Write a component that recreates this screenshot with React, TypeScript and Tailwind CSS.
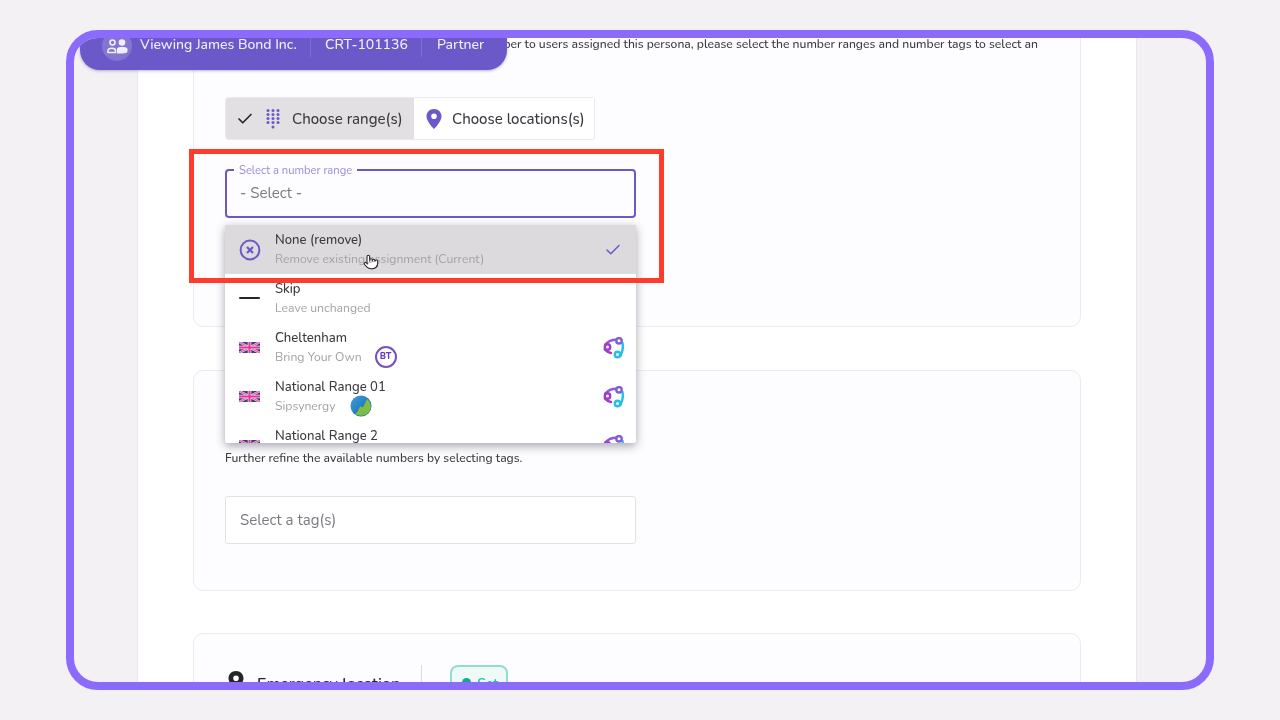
import React from "react";
import { Check, Pointer } from "lucide-react";

const font = "font-['Nunito','Noto_Sans','Open_Sans',sans-serif]";

function Flag() {
  return (
    <svg width="21" height="11" viewBox="0 0 21 11" className="shrink-0">
      <rect width="21" height="11" rx="1" fill="#3a3f78" />
      <path d="M0 0L21 11M21 0L0 11" stroke="#f3c6dc" strokeWidth="2.4" />
      <path d="M0 0L21 11M21 0L0 11" stroke="#e0409a" strokeWidth="0.9" />
      <path d="M10.5 0V11M0 5.5H21" stroke="#f7d6e6" strokeWidth="3.6" />
      <path d="M10.5 0V11M0 5.5H21" stroke="#e535a0" strokeWidth="2" />
    </svg>
  );
}

function Network() {
  return (
    <svg width="22" height="22" viewBox="0 0 22 22" fill="none" strokeWidth="2.4" strokeLinecap="round">
      <path d="M14 2.800C10 2.800 6 4.500 3.200 7.600" stroke="#8a5ad8" />
      <path d="M2.800 12.500C4.500 14.500 6.500 15.500 9 16" stroke="#a03ccc" />
      <path d="M20.500 6C21.300 10 21 14 18.500 19" stroke="#25bfe9" />
      <circle cx="17" cy="3.800" r="2.700" stroke="#7f5ed8" />
      <circle cx="5.500" cy="10" r="2.700" stroke="#a03ccc" />
      <circle cx="15.500" cy="17.500" r="2.700" stroke="#25bfe9" />
    </svg>
  );
}

function Row({
  icon,
  title,
  sub,
  badge,
  right,
  active,
}: {
  icon: React.ReactNode;
  title: string;
  sub?: string;
  badge?: React.ReactNode;
  right?: React.ReactNode;
  active?: boolean;
}) {
  return (
    <div className={`flex h-[49px] shrink-0 items-start pl-[14px] pr-[11px] ${active ? "bg-[#dcdadd]" : "bg-white"}`}>
      <div className="flex h-[49px] w-[36px] shrink-0 items-center">{icon}</div>
      <div className="min-w-0 flex-1 pt-[6px]">
        <div className="text-[13.1px] font-medium leading-[18px] text-[#3b3a40]">{title}</div>
        <div className="flex h-[20px] items-center text-[12.2px] text-[#a3a2a8]">
          {sub}
          {badge}
        </div>
      </div>
      <div className="flex h-[49px] w-[24px] items-center justify-center">{right}</div>
    </div>
  );
}

export default function App() {
  return (
    <div className={`h-[720px] w-[1280px] overflow-hidden bg-[#f3f1f4] pl-[66px] pt-[30px] ${font}`}>
      <div className="relative h-[660px] w-[1148px] overflow-hidden rounded-[32px] border-8 border-[#8a6bfb] bg-[#f3f1f4]">
        {/* banner */}
        <div className="absolute left-[6px] top-0 z-30 flex h-[32px] w-[427px] items-center rounded-b-[20px] bg-[#6b58c9] pb-[18px] pl-[22px] text-[14px] font-medium text-[#f1effb] shadow-[0_1px_3px_rgba(60,50,120,0.35)] blur-[0.4px]">
          <div className="mt-[2px] flex h-[30px] w-[30px] shrink-0 items-center justify-center rounded-full bg-[#8475d3]">
            <svg width="21" height="15" viewBox="0 0 21 15" fill="#f1effb">
              <circle cx="5.500" cy="3.500" r="2.500" fill="none" stroke="#f1effb" strokeWidth="1.600" />
              <circle cx="15" cy="3.500" r="3.300" />
              <path d="M1 13.500V11.500C1 10 2.500 9.200 5 9.200S8.500 10 8.500 11.500V13.500Z" fill="none" stroke="#f1effb" strokeWidth="1.600" />
              <path d="M10 14.500V10C10 8.500 12 8 15 8s5.500.5 5.500 2V12c0 1.800-2 2.500-5.500 2.500Z" />
            </svg>
          </div>
          <span className="ml-[8px] w-[171px] shrink-0 whitespace-nowrap border-r border-[#7f6ed2] leading-[24px]">Viewing James Bond Inc.</span>
          <span className="w-[111px] shrink-0 whitespace-nowrap border-r border-[#7f6ed2] pl-[14px] leading-[24px]">CRT-101136</span>
          <span className="pl-[15px] leading-[24px]">Partner</span>
        </div>

        {/* highlight */}
        <div className="pointer-events-none absolute left-[115px] top-[111px] z-40 h-[134px] w-[475px] border-[5px] border-[#ff3b2a]" />

        {/* page panel */}
        <div className="ml-[63px] h-full w-[1000px] overflow-hidden border-x border-[#eae7f5] bg-white px-[55px] blur-[0.4px]">
          {/* card 1 */}
          <div className="-mt-[40px] h-[329px] rounded-[10px] border border-[#eceaf0] bg-[#fdfcfe] pl-[31px] pr-[42px] pt-[36px]">
            <p className="h-[18px] whitespace-nowrap text-right text-[12.15px] font-medium leading-[18px] text-[#3b3a40]">
              To automatically assign a phone number to users assigned this persona, please select the number ranges and number tags to select an
            </p>
            <div className="mt-[44px] flex h-[43px] w-[370px] overflow-hidden rounded-[3px] border border-[#ebe9ef] pt-0 text-[15px] font-medium text-[#3b3a40]">
              <div className="flex w-[188px] shrink-0 items-center bg-[#e2e0e3] pl-[10px] pt-[1px]">
                <Check size={18} strokeWidth={2.2} className="text-[#26252b]" />
                <svg width="16" height="20" viewBox="0 0 16 20" fill="#6b58c9" className="ml-[11px]">
                  {[1.5, 5.5, 9.5, 13.5].map((y) =>
                    [3, 8, 13].map((x) => <circle key={`${x}-${y}`} cx={x} cy={y} r="1.500" />)
                  )}
                  <circle cx="8" cy="18" r="1.500" />
                </svg>
                <span className="ml-[11px] whitespace-nowrap">Choose range(s)</span>
              </div>
              <div className="flex flex-1 items-center bg-white pl-[12px] pt-[1px]">
                <svg width="16" height="20" viewBox="0 0 16 20" fill="#6b58c9">
                  <path fillRule="evenodd" d="M8 0C3.600 0 .5 3.200.5 7.400.5 12.500 8 20 8 20s7.500-7.500 7.500-12.600C15.500 3.200 12.400 0 8 0Zm0 10a2.800 2.800 0 1 1 0-5.600A2.800 2.800 0 0 1 8 10Z" />
                </svg>
                <span className="ml-[10px] whitespace-nowrap">Choose locations(s)</span>
              </div>
            </div>

            {/* select */}
            <div className="relative z-20 mt-[29px] h-[49px] w-[411px]">
              <div className="flex h-full items-center rounded-[4px] border-2 border-[#6b58c9] bg-[#fdfcfe] pb-[1px] pl-[13px] text-[15px] text-[#7b7a80]">- Select -</div>
              <span className="absolute left-[9px] top-[-5px] whitespace-nowrap bg-[#fdfcfe] px-[5px] text-[11.2px] leading-[14px] text-[#9d8ad9]">Select a number range</span>

              {/* dropdown */}
              <div className="absolute left-0 top-[56px] flex h-[218px] w-[411px] flex-col overflow-hidden rounded-b-[3px] bg-white shadow-[0_3px_10px_rgba(40,35,60,0.4)]">
                <Row
                  active
                  title="None (remove)"
                  sub="Remove existing assignment (Current)"
                  icon={
                    <svg width="22" height="22" viewBox="0 0 22 22" fill="none" stroke="#6b58c9">
                      <circle cx="11" cy="11" r="9.400" strokeWidth="2" />
                      <path d="M8 8l6 6M14 8l-6 6" strokeWidth="2.200" />
                    </svg>
                  }
                  right={<Check size={18} strokeWidth={2} className="text-[#6b58c9]" />}
                />
                <Row
                  title="Skip"
                  sub="Leave unchanged"
                  icon={<div className="-mt-[1px] h-[2.500px] w-[21px] rounded bg-[#26252b]" />}
                />
                <Row
                  title="Cheltenham"
                  sub="Bring Your Own"
                  icon={<Flag />}
                  right={<Network />}
                  badge={
                    <span className="ml-[13px] flex h-[22px] w-[22px] items-center justify-center rounded-full border-2 border-[#7a4fc4] text-[9px] font-extrabold text-[#6b3fb8]">BT</span>
                  }
                />
                <Row
                  title="National Range 01"
                  sub="Sipsynergy"
                  icon={<Flag />}
                  right={<Network />}
                  badge={
                    <svg width="22" height="22" viewBox="0 0 22 22" className="ml-[14px]">
                      <defs>
                        <linearGradient id="gl" x1="0" y1="0" x2="1" y2="1">
                          <stop offset="0" stopColor="#3aa0e0" />
                          <stop offset="1" stopColor="#16619f" />
                        </linearGradient>
                      </defs>
                      <circle cx="11" cy="11" r="10.500" fill="url(#gl)" />
                      <path d="M5 19c3-1.500 3.500-5.500 5.500-8 .8 2 2.500 1.500 3.500-.5 1-2 2-4.500 3-6.500 4 3.500 5 8.500 2.500 12.500-3 4.500-10 5.500-14.500 2.500Z" fill="#7dbf45" />
                    </svg>
                  }
                />
                <Row title="National Range 2" icon={<Flag />} right={<Network />} />
              </div>

              <Pointer
                size={16}
                strokeWidth={1.6}
                fill="#ffffff"
                className="absolute left-[138px] top-[85px] z-10 text-[#26252b]"
              />
            </div>
          </div>

          {/* card 2 */}
          <div className="mt-[43px] h-[221px] rounded-[10px] border border-[#eceaf0] bg-[#fdfcfe] pl-[31px] pt-[78px]">
            <p className="text-[12.1px] font-medium leading-[18px] text-[#3b3a40]">Further refine the available numbers by selecting tags.</p>
            <div className="mt-[29px] flex h-[48px] w-[411px] items-center rounded-[3px] border border-[#e3e1e6] bg-white pl-[14px] pt-[1px] text-[15px] text-[#7b7a80]">Select a tag(s)</div>
          </div>

          {/* card 3 */}
          <div className="mt-[42px] flex h-[120px] items-start rounded-[10px] border border-[#eceaf0] bg-[#fdfcfe] pl-[31px] pt-[31px]">
            <div className="flex h-[38px] items-start pt-[6px]">
              <svg width="16" height="20" viewBox="0 0 16 20" fill="#26252b" className="ml-[3px]">
                <path fillRule="evenodd" d="M8 0C3.600 0 .5 3.200.5 7.400.5 12.500 8 20 8 20s7.500-7.500 7.500-12.600C15.500 3.200 12.400 0 8 0Zm0 10a2.800 2.800 0 1 1 0-5.600A2.800 2.800 0 0 1 8 10Z" />
              </svg>
              <span className="ml-[13px] text-[16px] font-semibold leading-[26px] text-[#26252b]">Emergency location</span>
            </div>
            <div className="ml-[21px] h-[38px] w-px bg-[#dddbe2]" />
            <div className="ml-[28px] flex h-[38px] w-[58px] items-start rounded-[8px] border-2 border-[#8fdcd0] bg-[#effaf8] pl-[10px] pt-[6px] text-[14px] font-semibold text-[#27c2a8]">
              <span className="mr-[6px] mt-[5px] h-[9px] w-[9px] rounded-full bg-[#17a98f]" />
              Set
            </div>
          </div>
        </div>
      </div>
    </div>
  );
}
